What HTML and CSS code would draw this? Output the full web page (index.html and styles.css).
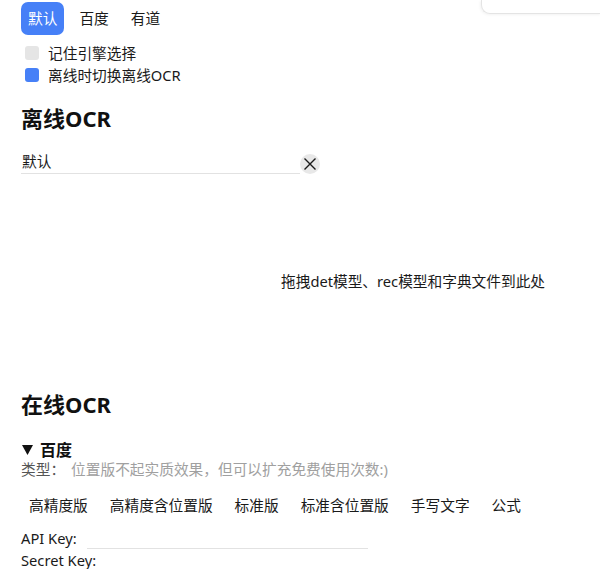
FILE: index.html
```html
<!DOCTYPE html>
<html lang="zh-CN">
<head>
<meta charset="utf-8">
<title>OCR 设置</title>
<link rel="stylesheet" href="styles.css">
</head>
<body>
<div class="popup"></div>
<div class="page">
  <div class="tabs">
    <button class="tab active">默认</button>
    <button class="tab">百度</button>
    <button class="tab">有道</button>
  </div>
  <div class="checks">
    <label class="check"><span class="box"></span>记住引擎选择</label>
    <label class="check"><span class="box on"></span>离线时切换离线OCR</label>
  </div>
  <h2 class="title t1">离线OCR</h2>
  <div class="select-row">
    <div class="select">默认</div>
    <button class="clear" aria-label="清除">
      <svg width="14" height="14" viewBox="0 0 14 14"><path d="M1.5 1.5 L12.5 12.5 M12.5 1.5 L1.5 12.5" stroke="#1a1a1a" stroke-width="1.4" fill="none"/></svg>
    </button>
  </div>
  <div class="drop"><span>拖拽det模型、rec模型和字典文件到此处</span></div>
  <h2 class="title t2">在线OCR</h2>
  <div class="engine">
    <div class="summary">
      <svg class="tri" width="11" height="10" viewBox="0 0 11 10"><polygon points="0,0 11,0 5.5,10" fill="#111"/></svg>
      <span class="summary-text">百度</span>
    </div>
    <div class="type"><span class="type-label">类型：</span><span class="type-hint">位置版不起实质效果，但可以扩充免费使用次数:)</span></div>
    <div class="modes">
      <button class="mode">高精度版</button>
      <button class="mode">高精度含位置版</button>
      <button class="mode">标准版</button>
      <button class="mode">标准含位置版</button>
      <button class="mode">手写文字</button>
      <button class="mode">公式</button>
    </div>
    <div class="field"><span class="field-label">API Key:</span><span class="field-input"></span></div>
    <div class="field"><span class="field-label">Secret Key:</span></div>
  </div>
</div>
</body>
</html>
```
FILE: styles.css
```css
html, body {
  margin: 0;
  padding: 0;
  background: #ffffff;
  overflow: hidden;
}
body {
  font-family: "Noto Sans", "Noto Sans CJK SC", sans-serif;
  color: #1a1a1a;
  font-size: 14.7px;
  position: relative;
  height: 569px;
}
.popup {
  position: absolute;
  left: 481px;
  top: 0;
  width: 119px;
  height: 13px;
  border-left: 1px solid #e4e4e4;
  border-bottom: 1px solid #e4e4e4;
  border-bottom-left-radius: 9px;
  box-shadow: -1px 1px 3px rgba(0,0,0,0.05);
  background: #fff;
}
.page {
  padding: 2px 0 0 21px;
}
button {
  font-family: inherit;
  font-size: 14.7px;
  border: none;
  background: none;
  color: #1a1a1a;
  cursor: pointer;
}
.tabs {
  display: flex;
  gap: 8px;
}
.tab {
  padding: 7px 7px;
  line-height: 19px;
  border-radius: 7px;
}
.tab.active {
  background: #4680f7;
  color: #fff;
}
.checks {
  margin-top: 7px;
  display: flex;
  flex-direction: column;
}
.check {
  display: flex;
  align-items: center;
  height: 22px;
  line-height: 22px;
}
.box {
  width: 14px;
  height: 14px;
  border-radius: 3px;
  background: #e5e5e5;
  margin: 0 9px 0 4px;
}
.box.on {
  background: #4680f7;
}
.title {
  margin: 0;
  font-size: 22px;
  font-weight: 700;
  line-height: 30px;
  color: #111;
}
.t1 {
  margin-top: 17px;
}
.select-row {
  margin-top: 17px;
  display: flex;
  align-items: flex-end;
}
.select {
  width: 278px;
  height: 23px;
  line-height: 22px;
  padding-left: 1px;
  border-bottom: 1px solid #e2e2e2;
}
.clear {
  width: 20px;
  height: 20px;
  padding: 0;
  margin: 0;
  border-radius: 50%;
  background: #e8e8e8;
  display: flex;
  align-items: center;
  justify-content: center;
}
.drop {
  height: 212px;
  display: flex;
  align-items: center;
  padding-left: 260px;
}
.t2 {
  margin-top: 3px;
}
.engine {
  margin-top: 21px;
}
.summary {
  display: flex;
  align-items: center;
  height: 20px;
  line-height: 18px;
  font-size: 16px;
  font-weight: 700;
  color: #111;
}
.summary-text {
  line-height: 18px;
}
.tri {
  margin: 0 7px 0 1px;
}
.type {
  line-height: 19px;
  height: 19px;
}
.type-label {
  color: #555;
}
.type-hint {
  color: #a0a0a0;
  margin-left: 6px;
}
.modes {
  margin-top: 8px;
  display: flex;
  gap: 6px;
}
.mode {
  padding: 8px 8px;
  line-height: 20px;
}
.field {
  display: flex;
  align-items: flex-end;
  height: 22px;
  line-height: 22px;
}
.modes + .field {
  margin-top: 4px;
}
.field-input {
  width: 281px;
  height: 20px;
  margin-left: 10px;
  border-bottom: 1px solid #e2e2e2;
}
```
